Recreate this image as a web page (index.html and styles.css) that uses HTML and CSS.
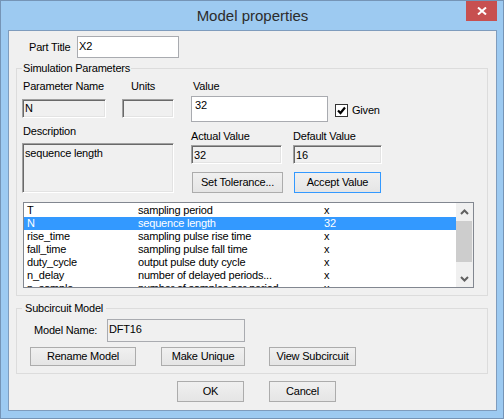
FILE: index.html
```html
<!DOCTYPE html>
<html>
<head>
<meta charset="utf-8">
<title>Model properties</title>
<link rel="stylesheet" href="styles.css">
</head>
<body>
<div class="window">
  <div class="titlebar">
    <div class="title">Model properties</div>
    <div class="close">
      <svg width="10" height="8" viewBox="0 0 10 8"><path d="M1 0.5 L9 7.5 M9 0.5 L1 7.5" stroke="#fff" stroke-width="2" fill="none"/></svg>
    </div>
  </div>
  <div class="client">
    <div class="part-row">
      <span class="part-label">Part Title</span>
      <div class="input part-input">X2</div>
    </div>

    <fieldset class="group sim">
      <legend>Simulation Parameters</legend>
      <div class="sim-top">
        <div class="left-col">
          <div class="labels-row"><span class="lbl-pn">Parameter Name</span><span>Units</span></div>
          <div class="fields-row">
            <div class="sunken f-name">N</div>
            <div class="sunken f-units"></div>
          </div>
          <div class="desc-label">Description</div>
          <div class="sunken f-desc">sequence length</div>
        </div>
        <div class="right-col">
          <div class="value-label">Value</div>
          <div class="value-row">
            <div class="input f-value">32</div>
            <div class="check">
              <span class="box"><svg width="11" height="11" viewBox="0 0 11 11"><path d="M2 5.5 L4.5 8 L9 2.5" stroke="#000" stroke-width="2.2" fill="none"/></svg></span>
              <span>Given</span>
            </div>
          </div>
          <div class="av-grid">
            <span>Actual Value</span>
            <span>Default Value</span>
            <div class="sunken f-actual">32</div>
            <div class="sunken f-default">16</div>
            <div class="btn b-tol">Set Tolerance...</div>
            <div class="btn b-accept">Accept Value</div>
          </div>
        </div>
      </div>
      <div class="listbox">
        <div class="rows">
          <div class="row"><span>T</span><span>sampling period</span><span>x</span></div>
          <div class="row selected"><span>N</span><span>sequence length</span><span>32</span></div>
          <div class="row"><span>rise_time</span><span>sampling pulse rise time</span><span>x</span></div>
          <div class="row"><span>fall_time</span><span>sampling pulse fall time</span><span>x</span></div>
          <div class="row"><span>duty_cycle</span><span>output pulse duty cycle</span><span>x</span></div>
          <div class="row"><span>n_delay</span><span>number of delayed periods...</span><span>x</span></div>
          <div class="row"><span>n_sample</span><span>number of samples per period</span><span>x</span></div>
        </div>
        <div class="scrollbar">
          <div class="arrow"><svg width="9" height="6" viewBox="0 0 9 6"><path d="M1 5 L4.5 1.5 L8 5" stroke="#606060" stroke-width="2" fill="none"/></svg></div>
          <div class="thumb"></div>
          <div class="track"></div>
          <div class="arrow"><svg width="9" height="6" viewBox="0 0 9 6"><path d="M1 1 L4.5 4.5 L8 1" stroke="#606060" stroke-width="2" fill="none"/></svg></div>
        </div>
      </div>
    </fieldset>

    <fieldset class="group sub">
      <legend>Subcircuit Model</legend>
      <div class="sub-inner">
        <div class="model-row">
          <span class="model-label">Model Name:</span>
          <div class="input model-input">DFT16</div>
        </div>
        <div class="sub-buttons">
          <div class="btn b-rename">Rename Model</div>
          <div class="btn b-unique">Make Unique</div>
          <div class="btn b-view">View Subcircuit</div>
        </div>
      </div>
    </fieldset>

    <div class="dialog-buttons">
      <div class="btn b-ok">OK</div>
      <div class="btn b-cancel">Cancel</div>
    </div>
  </div>
</div>
</body>
</html>
```

FILE: styles.css
```css
html, body {
  margin: 0;
  padding: 0;
}
body {
  font-family: "Liberation Sans", Arial, sans-serif;
  font-size: 11px;
  line-height: 13px;
  letter-spacing: -0.2px;
  color: #000;
}
.window {
  width: 504px;
  height: 419px;
  box-sizing: border-box;
  border: 1px solid #7594b6;
  background: #9dcaf1;
  padding: 0 6px 7px 7px;
  display: flex;
  flex-direction: column;
}
.titlebar {
  height: 29px;
  flex: none;
  position: relative;
  display: flex;
  justify-content: center;
}
.title {
  font-size: 15px;
  line-height: 29px;
  letter-spacing: 0;
  color: #2c2c2c;
}
.close {
  position: absolute;
  right: 0;
  top: 0;
  width: 31px;
  height: 20px;
  background: #c75050;
  display: flex;
  align-items: center;
  justify-content: center;
}
.client {
  flex: 1;
  border: 1px solid #7f9cbd;
  background: #f0f0f0;
  display: flex;
  flex-direction: column;
}
.input {
  box-sizing: border-box;
  border: 1px solid #a9abb0;
  background: #fff;
}
.sunken {
  box-sizing: border-box;
  border: 1px solid;
  border-color: #a0a0a0 #fff #fff #a0a0a0;
  box-shadow: inset 1px 1px 0 #696969, inset -1px -1px 0 #e3e3e3;
  background: #f0f0f0;
  padding: 2px 0 0 2px;
}
.btn {
  box-sizing: border-box;
  border: 1px solid #acacac;
  background: linear-gradient(#f0f0f0, #e5e5e5);
  display: flex;
  align-items: center;
  justify-content: center;
}

/* part title */
.part-row {
  margin-top: 5px;
  display: flex;
  align-items: center;
  height: 22px;
}
.part-label {
  width: 68px;
  box-sizing: border-box;
  padding-left: 20px;
}
.part-input {
  width: 102px;
  height: 22px;
  padding: 3px 0 0 1px;
}

/* groups */
.group {
  margin: 4px 8px 0 7px;
  border: 1px solid #dcdcdc;
  min-width: 0;
}
.group legend {
  padding: 0 1px;
  line-height: 13px;
}
.sim {
  padding: 5px 0 7px 5px;
}
.sim-top {
  display: flex;
  gap: 17px;
}
.left-col {
  width: 152px;
  display: flex;
  flex-direction: column;
}
.labels-row {
  display: flex;
  height: 13px;
}
.lbl-pn {
  width: 109px;
  box-sizing: border-box;
  padding-left: 1px;
}
.fields-row {
  margin-top: 6px;
  display: flex;
  gap: 16px;
}
.f-name {
  width: 84px;
  height: 19px;
}
.f-units {
  width: 52px;
  height: 19px;
}
.desc-label {
  margin-top: 7px;
  padding-left: 1px;
  height: 13px;
}
.f-desc {
  margin-top: 5px;
  width: 152px;
  height: 50px;
  padding-top: 3px;
}
.right-col {
  display: flex;
  flex-direction: column;
}
.value-label {
  height: 13px;
  padding-left: 2px;
}
.value-row {
  margin-top: 3px;
  display: flex;
  align-items: flex-start;
}
.f-value {
  width: 137px;
  height: 26px;
  padding: 2px 0 0 3px;
}
.check {
  margin: 8px 0 0 7px;
  display: flex;
  align-items: center;
  gap: 4px;
}
.box {
  width: 13px;
  height: 13px;
  box-sizing: border-box;
  border: 1px solid #333;
  background: #fff;
  display: flex;
  align-items: center;
  justify-content: center;
}
.av-grid {
  margin-top: 8px;
  display: grid;
  grid-template-columns: 102px 89px;
  grid-template-rows: 13px 19px 21px;
  row-gap: 2px;
}
.f-actual {
  width: 91px;
  height: 19px;
  padding-top: 3px;
}
.f-default {
  width: 89px;
  height: 19px;
  padding-top: 3px;
}
.b-tol {
  margin-top: 6px;
  margin-left: 1px;
  width: 91px;
  height: 21px;
}
.b-accept {
  margin-top: 6px;
  margin-left: 1px;
  width: 87px;
  height: 21px;
  border-color: #3399ff;
}

/* list */
.listbox {
  margin: 9px 0 0 1px;
  width: 451px;
  height: 86px;
  box-sizing: border-box;
  border: 1px solid #828790;
  background: #fff;
  display: flex;
  overflow: hidden;
}
.rows {
  flex: 1;
  padding-top: 1px;
  overflow: hidden;
}
.row {
  height: 13px;
  display: grid;
  grid-template-columns: 111px 186px 1fr;
  padding-left: 3px;
  white-space: nowrap;
}
.row.selected {
  background: #3399ff;
  color: #fff;
}
.scrollbar {
  width: 17px;
  background: #f0f0f0;
  display: flex;
  flex-direction: column;
}
.arrow {
  height: 17px;
  display: flex;
  align-items: center;
  justify-content: center;
}
.thumb {
  margin: 1px 1px 0 0;
  height: 41px;
  background: #cdcdcd;
}
.track {
  flex: 1;
}

/* subcircuit */
.sub {
  margin-top: 6px;
  padding: 4px 0 7px 5px;
}
.sub legend {
  padding: 0 3px;
}
.sub-inner {
  padding-left: 8px;
}
.model-row {
  display: flex;
  align-items: center;
  height: 23px;
}
.model-label {
  width: 77px;
  box-sizing: border-box;
  padding-left: 4px;
}
.model-input {
  width: 138px;
  height: 23px;
  background: #f0f0f0;
  padding: 3px 0 0 1px;
  align-self: stretch;
}
.sub-buttons {
  margin-top: 5px;
  display: flex;
}
.sub-buttons .btn {
  height: 19px;
}
.b-rename {
  width: 106px;
}
.b-unique {
  margin-left: 25px;
  width: 84px;
}
.b-view {
  margin-left: 24px;
  width: 87px;
}

/* dialog buttons */
.dialog-buttons {
  margin-top: 7px;
  padding-left: 168px;
  display: flex;
  gap: 25px;
}
.dialog-buttons .btn {
  width: 67px;
  height: 21px;
}
```
